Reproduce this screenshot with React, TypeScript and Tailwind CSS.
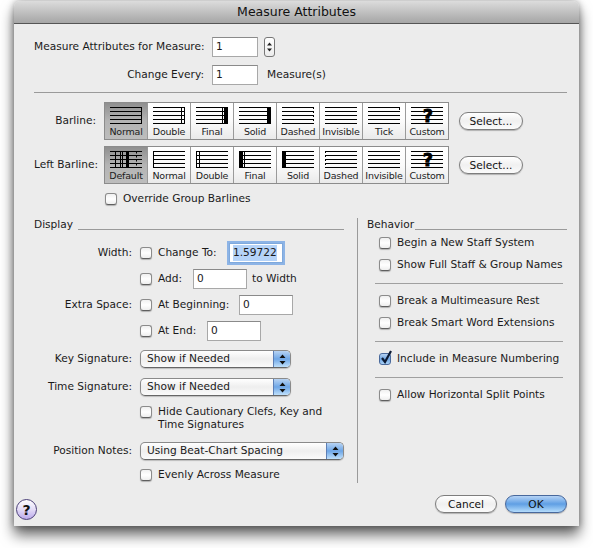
import React from 'react';

type BarKind =
  | 'normal' | 'double' | 'final' | 'solid' | 'dashed' | 'invisible' | 'tick' | 'custom'
  | 'default' | 'leftNormal' | 'leftDouble' | 'leftFinal' | 'leftSolid' | 'leftDashed';

function Bars({ kind }: { kind: BarKind }) {
  const v = (x: number, w = 1, key?: string, dash?: string) => (
    <line key={key ?? `${x}-${w}`} x1={x} x2={x} y1={0.5} y2={16.5} stroke="#000" strokeWidth={w} strokeDasharray={dash} />
  );
  let marks: React.ReactNode = null;
  if (kind === 'normal') marks = v(31.5);
  if (kind === 'double') marks = [v(28.5), v(31.5)];
  if (kind === 'final') marks = [v(26.5), v(30, 4)];
  if (kind === 'solid') marks = v(30, 4);
  if (kind === 'dashed') marks = v(31.5, 1, 'd', '1.5 2.5');
  if (kind === 'tick') marks = <line x1={31.5} x2={31.5} y1={0} y2={3} stroke="#000" />;
  if (kind === 'default') marks = [v(5.5), v(10.5), v(12.5), v(17.5, 3), v(26.5, 1, 'd', '2 2')];
  if (kind === 'leftNormal') marks = v(0.5);
  if (kind === 'leftDouble') marks = [v(0.5), v(3.5)];
  if (kind === 'leftFinal') marks = [v(2, 4), v(5.5)];
  if (kind === 'leftSolid') marks = v(2, 4);
  if (kind === 'leftDashed') marks = v(0.5, 1, 'd', '1.5 2.5');
  return (
    <svg width="32" height="17" viewBox="0 0 32 17" className="block overflow-visible">
      {[0.5, 4.5, 8.5, 12.5, 16.5].map(y => (
        <line key={y} x1={0} x2={32} y1={y} y2={y} stroke="#000" />
      ))}
      {marks}
      {kind === 'custom' && (
        <text x="17" y="14.5" textAnchor="middle" fontSize="17" fontWeight="900" fontFamily="'DejaVu Sans', sans-serif" stroke="#000" strokeWidth="1">?</text>
      )}
    </svg>
  );
}

function BarStrip({ items }: { items: [string, BarKind][] }) {
  return (
    <div className="flex h-[38px] w-[345px] border border-[#8c8c8c]">
      {items.map(([label, kind], i) => (
        <div
          key={label}
          className={`flex flex-1 flex-col items-center pt-[4px] ${i > 0 ? 'border-l border-[#9a9a9a]' : ''} ${
            i === 0
              ? 'bg-gradient-to-b from-[#8f8f8f] via-[#b4b4b4] to-[#bdbdbd]'
              : 'bg-gradient-to-b from-[#ffffff] via-[#fbfbfb] to-[#eaeaea]'
          }`}
        >
          <Bars kind={kind} />
          <span className="mt-[2px] text-[9.5px] leading-[12px] tracking-[-0.2px] text-[#1c1c1c]">{label}</span>
        </div>
      ))}
    </div>
  );
}

function Check({ checked }: { checked?: boolean }) {
  if (checked) {
    return (
      <span className="relative block h-[12px] w-[12px] shrink-0 rounded-[3px] border border-[#4a6a9c] bg-gradient-to-b from-[#b6d2f2] via-[#6fa5e2] to-[#a9d2f8]">
        <svg width="15" height="16" viewBox="0 0 15 16" className="absolute left-[-1px] top-[-5px]">
          <path d="M3 9l3 4 6-11" fill="none" stroke="#0c1a33" strokeWidth="2.2" />
        </svg>
      </span>
    );
  }
  return (
    <span className="block h-[12px] w-[12px] shrink-0 rounded-[3px] border border-[#8b8b8b] border-b-[#5f5f5f] bg-gradient-to-b from-[#f0f0f0] via-[#ffffff] to-[#eeeeee] shadow-[0_1px_1px_rgba(0,0,0,0.25)]" />
  );
}

function Field({ value, width = 'w-[54px]' }: { value: string; width?: string }) {
  return (
    <span className={`flex h-[20px] items-center border border-[#a8a8a8] border-t-[#8a8a8a] bg-white pl-[3px] ${width}`}>
      {value}
    </span>
  );
}

function Select({ value, width }: { value: string; width: string }) {
  return (
    <div className={`flex h-[18px] overflow-hidden rounded-[5px] border border-[#8a8a8a] border-b-[#666] bg-gradient-to-b from-[#ffffff] via-[#eeeeee] to-[#fafafa] shadow-[0_1px_1px_rgba(0,0,0,0.2)] ${width}`}>
      <span className="flex-1 pl-[6px] leading-[15px]">{value}</span>
      <span className="flex w-[17px] items-center justify-center border-l border-[#5d7fb5] bg-gradient-to-b from-[#b7d3f3] via-[#6ea6e6] to-[#bfe0fb]">
        <Arrows />
      </span>
    </div>
  );
}

function Arrows() {
  return (
    <svg width="7" height="11" viewBox="0 0 7 11">
      <path d="M3.5 0.5L6.5 4H0.5zM3.5 10.5L0.5 7H6.5z" fill="#111" />
    </svg>
  );
}

function PushButton({ label, primary }: { label: string; primary?: boolean }) {
  return (
    <button
      className={`flex h-[18px] w-[62px] items-center justify-center rounded-full border ${
        primary
          ? 'border-[#48689c] bg-gradient-to-b from-[#b5d3f5] via-[#5f9fe4] to-[#b4dcfb]'
          : 'border-[#7d7d7d] bg-gradient-to-b from-[#ffffff] via-[#f0f0f0] to-[#fbfbfb]'
      } text-[10.6px] leading-none text-[#111] shadow-[0_1px_1px_rgba(0,0,0,0.25)]`}
    >
      {label}
    </button>
  );
}

function Row({ label, children, className = '' }: { label?: string; children: React.ReactNode; className?: string }) {
  return (
    <div className={`flex h-[20px] items-center ${className}`}>
      <span className="mr-[8px] w-[98px] shrink-0 whitespace-nowrap text-right">{label}</span>
      {children}
    </div>
  );
}

function Rule() {
  return <div className="ml-[8px] w-[188px] border-t border-[#a0a0a0]" />;
}

function BehaviorRow({ label, checked }: { label: string; checked?: boolean }) {
  return (
    <div className="ml-[12px] flex h-[22px] items-center gap-[6px] whitespace-nowrap">
      <Check checked={checked} />
      {label}
    </div>
  );
}

const topBars: [string, BarKind][] = [
  ['Normal', 'normal'], ['Double', 'double'], ['Final', 'final'], ['Solid', 'solid'],
  ['Dashed', 'dashed'], ['Invisible', 'invisible'], ['Tick', 'tick'], ['Custom', 'custom'],
];

const leftBars: [string, BarKind][] = [
  ['Default', 'default'], ['Normal', 'leftNormal'], ['Double', 'leftDouble'], ['Final', 'leftFinal'],
  ['Solid', 'leftSolid'], ['Dashed', 'leftDashed'], ['Invisible', 'invisible'], ['Custom', 'custom'],
];

function SelectButton() {
  return (
    <button className="flex h-[18px] w-[64px] items-center justify-center rounded-full border border-[#7d7d7d] bg-gradient-to-b from-[#ffffff] via-[#f0f0f0] to-[#fbfbfb] text-[10.6px] leading-none text-[#111] shadow-[0_1px_1px_rgba(0,0,0,0.25)]">
      Select...
    </button>
  );
}

export default function App() {
  return (
    <div className="h-[548px] w-[593px] overflow-hidden bg-white pl-[14px] pt-[1px] font-['DejaVu_Sans',sans-serif] text-[10.6px] text-[#1a1a1a]">
      <div className="h-[525px] w-[565px] rounded-t-[6px] bg-[#ececec] shadow-[0_9px_14px_rgba(0,0,0,0.6),0_0_7px_rgba(0,0,0,0.35)]">
        <div className="flex h-[23px] items-center justify-center rounded-t-[6px] border-b border-[#555] bg-gradient-to-b from-[#dcdcdc] to-[#a6a6a6] text-[12.5px] text-[#111]">
          Measure Attributes
        </div>

        <div className="pl-[20px] pr-[12px]">
          <div className="mt-[13px] flex h-[20px] items-center">
            <span className="mr-[8px] w-[170px] whitespace-nowrap text-right">Measure Attributes for Measure:</span>
            <Field value="1" width="w-[46px]" />
            <span className="ml-[6px] flex h-[20px] w-[11px] items-center justify-center rounded-[3px] border border-[#777] bg-gradient-to-b from-[#fff] to-[#ececec]">
              <svg width="5" height="10" viewBox="0 0 5 10">
                <path d="M2.5 0.5L5 3.5H0zM2.5 9.5L0 6.5H5z" fill="#222" />
              </svg>
            </span>
          </div>
          <div className="mt-[8px] flex h-[20px] items-center">
            <span className="mr-[8px] w-[170px] whitespace-nowrap text-right">Change Every:</span>
            <Field value="1" width="w-[46px]" />
            <span className="ml-[9px]">Measure(s)</span>
          </div>

          <div className="mt-[7px] border-t border-[#9a9a9a]" />

          <div className="mt-[9px] flex items-center">
            <span className="mr-[8px] w-[62px] text-right">Barline:</span>
            <BarStrip items={topBars} />
            <div className="ml-[10px]"><SelectButton /></div>
          </div>
          <div className="mt-[6px] flex items-center">
            <span className="mr-[8px] w-[62px] whitespace-nowrap text-right">Left Barline:</span>
            <BarStrip items={leftBars} />
            <div className="ml-[10px]"><SelectButton /></div>
          </div>

          <div className="ml-[71px] mt-[8px] flex h-[14px] items-center gap-[6px]">
            <Check />
            Override Group Barlines
          </div>

          <div className="mt-[12px] flex h-[265px]">
            <div className="w-[310px]">
              <div className="flex h-[14px]">
                <span className="mr-[5px] leading-[12px]">Display</span>
                <span className="mb-[2px] flex-1 border-b border-[#9a9a9a]" />
              </div>

              <Row label="Width:" className="mt-[11px]">
                <Check />
                <span className="ml-[6px] w-[71px]">Change To:</span>
                <span className="flex h-[20px] w-[54px] items-center border border-[#7fa9dc] bg-white pl-[3px] shadow-[0_0_0_2px_#8db4e6]">
                  <span className="bg-[#b5d3f8]">1.59722</span>
                </span>
              </Row>
              <Row className="mt-[6px]">
                <Check />
                <span className="ml-[6px] w-[35px]">Add:</span>
                <Field value="0" />
                <span className="ml-[5px]">to Width</span>
              </Row>
              <Row label="Extra Space:" className="mt-[6px]">
                <Check />
                <span className="ml-[6px] w-[81px]">At Beginning:</span>
                <Field value="0" />
              </Row>
              <Row className="mt-[6px]">
                <Check />
                <span className="ml-[6px] w-[49px]">At End:</span>
                <Field value="0" />
              </Row>

              <Row label="Key Signature:" className="mt-[8px]">
                <Select value="Show if Needed" width="w-[151px]" />
              </Row>
              <Row label="Time Signature:" className="mt-[8px]">
                <Select value="Show if Needed" width="w-[151px]" />
              </Row>

              <div className="ml-[106px] mt-[8px] flex gap-[6px] leading-[13px]">
                <span className="pt-[1px]"><Check /></span>
                <span>Hide Cautionary Clefs, Key and<br />Time Signatures</span>
              </div>

              <Row label="Position Notes:" className="mt-[10px]">
                <Select value="Using Beat-Chart Spacing" width="w-[204px]" />
              </Row>
              <div className="ml-[106px] mt-[6px] flex h-[16px] items-center gap-[6px]">
                <Check />
                Evenly Across Measure
              </div>
            </div>

            <div className="ml-[13px] w-px bg-[#9a9a9a]" />

            <div className="ml-[9px] w-[200px]">
              <div className="flex h-[14px]">
                <span className="mr-[1px] leading-[12px]">Behavior</span>
                <span className="mb-[2px] flex-1 border-b border-[#9a9a9a]" />
              </div>
              <BehaviorRow label="Begin a New Staff System" />
              <BehaviorRow label="Show Full Staff & Group Names" />
              <div className="mt-[7px]"><Rule /></div>
              <div className="mt-[6px]">
                <BehaviorRow label="Break a Multimeasure Rest" />
                <BehaviorRow label="Break Smart Word Extensions" />
              </div>
              <div className="mt-[7px]"><Rule /></div>
              <div className="mt-[6px]"><BehaviorRow label="Include in Measure Numbering" checked /></div>
              <div className="mt-[7px]"><Rule /></div>
              <div className="mt-[6px]"><BehaviorRow label="Allow Horizontal Split Points" /></div>
            </div>
          </div>
        </div>

        <div className="flex items-start pl-[2px] pr-[12px]">
          <span className="mt-[16px] flex h-[21px] w-[21px] items-center justify-center rounded-full border border-[#4a3f78] bg-gradient-to-b from-[#ffffff] via-[#e4dcf7] to-[#bba9ea] text-[14px] font-bold leading-none text-[#111]">
            ?
          </span>
          <div className="ml-auto mt-[12px] flex gap-[8px]">
            <PushButton label="Cancel" />
            <PushButton label="OK" primary />
          </div>
        </div>
      </div>
    </div>
  );
}
